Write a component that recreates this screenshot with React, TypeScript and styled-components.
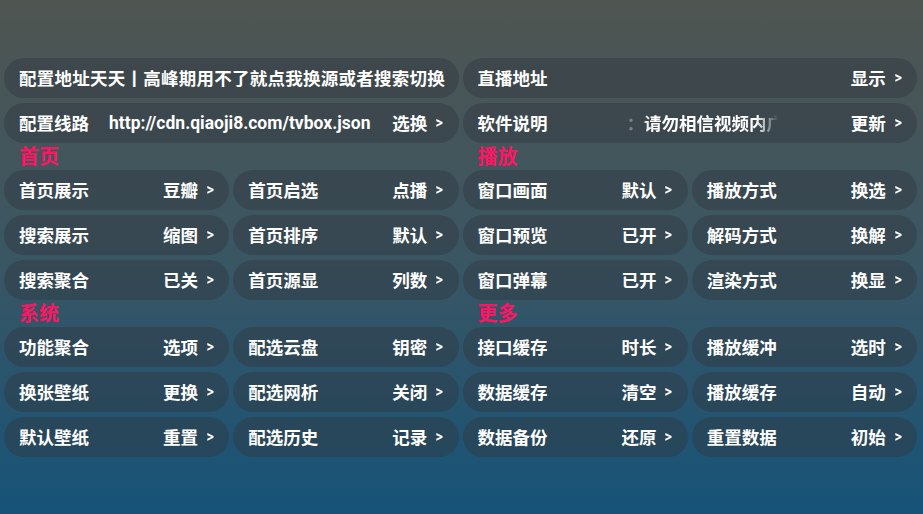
import React from "react";
import styled, { createGlobalStyle } from "styled-components";

const GlobalStyle = createGlobalStyle`
  html, body {
    margin: 0;
    padding: 0;
    height: 100%;
  }
  body {
    font-family: "Roboto", "Noto Sans CJK SC", sans-serif;
    background: #1a5277;
  }
  #root {
    height: 100%;
  }
`;

type Item = { label: string; value: string };

const homeItems: Item[] = [
  { label: "首页展示", value: "豆瓣" },
  { label: "首页启选", value: "点播" },
  { label: "搜索展示", value: "缩图" },
  { label: "首页排序", value: "默认" },
  { label: "搜索聚合", value: "已关" },
  { label: "首页源显", value: "列数" },
];

const playItems: Item[] = [
  { label: "窗口画面", value: "默认" },
  { label: "播放方式", value: "换选" },
  { label: "窗口预览", value: "已开" },
  { label: "解码方式", value: "换解" },
  { label: "窗口弹幕", value: "已开" },
  { label: "渲染方式", value: "换显" },
];

const systemItems: Item[] = [
  { label: "功能聚合", value: "选项" },
  { label: "配选云盘", value: "钥密" },
  { label: "换张壁纸", value: "更换" },
  { label: "配选网析", value: "关闭" },
  { label: "默认壁纸", value: "重置" },
  { label: "配选历史", value: "记录" },
];

const moreItems: Item[] = [
  { label: "接口缓存", value: "时长" },
  { label: "播放缓冲", value: "选时" },
  { label: "数据缓存", value: "清空" },
  { label: "播放缓存", value: "自动" },
  { label: "数据备份", value: "还原" },
  { label: "重置数据", value: "初始" },
];

const App = () => {
  return (
    <>
      <GlobalStyle />
      <S.Page>
        <S.Column>
          <S.Card>
            <S.Label $wide>配置地址天天丨高峰期用不了就点我换源或者搜索切换</S.Label>
          </S.Card>
          <S.Card>
            <S.Label>配置线路</S.Label>
            <S.Url>http://cdn.qiaoji8.com/tvbox.json</S.Url>
            <Value text="选换" />
          </S.Card>
          <S.Heading>首页</S.Heading>
          <Grid items={homeItems} />
          <S.Heading>系统</S.Heading>
          <Grid items={systemItems} />
        </S.Column>
        <S.Column>
          <S.Card>
            <S.Label>直播地址</S.Label>
            <Value text="显示" />
          </S.Card>
          <S.Card>
            <S.Label>软件说明</S.Label>
            <S.Marquee>
              <span>：请勿相信视频内广</span>
            </S.Marquee>
            <Value text="更新" />
          </S.Card>
          <S.Heading>播放</S.Heading>
          <Grid items={playItems} />
          <S.Heading>更多</S.Heading>
          <Grid items={moreItems} />
        </S.Column>
      </S.Page>
    </>
  );
};

const Value = ({ text }: { text: string }) => (
  <S.Value>
    {text}
    <S.Arrow>&gt;</S.Arrow>
  </S.Value>
);

const Grid = ({ items }: { items: Item[] }) => (
  <S.Grid>
    {items.map((it) => (
      <S.Card key={it.label}>
        <S.Label>{it.label}</S.Label>
        <Value text={it.value} />
      </S.Card>
    ))}
  </S.Grid>
);

const S = {
  Page: styled.div`
    box-sizing: border-box;
    width: 100%;
    min-height: 100%;
    padding: 58px 6px 0 4px;
    display: grid;
    grid-template-columns: 1fr 1fr;
    column-gap: 4px;
    align-content: start;
    background: linear-gradient(180deg, #4f5551 0%, #3a5663 50%, #165378 100%);
  `,
  Column: styled.div`
    display: flex;
    flex-direction: column;
    gap: 5px;
    min-width: 0;
  `,
  Grid: styled.div`
    display: grid;
    grid-template-columns: 1fr 1fr;
    column-gap: 4px;
    row-gap: 5px;
  `,
  Card: styled.div`
    box-sizing: border-box;
    height: 40px;
    border-radius: 20px;
    padding: 0 15px 1px;
    display: flex;
    align-items: center;
    background: rgba(48, 56, 64, 0.45);
    color: #ffffff;
    font-size: 17.5px;
    font-weight: 700;
    white-space: nowrap;
    overflow: hidden;
    min-width: 0;
  `,
  Label: styled.span<{ $wide?: boolean }>`
    flex-shrink: 0;
    letter-spacing: ${({ $wide }) => ($wide ? "0.25px" : "0")};
  `,
  Url: styled.span`
    margin-left: 20px;
    font-size: 17.5px;
  `,
  Value: styled.span`
    margin-left: auto;
    display: flex;
    align-items: center;
  `,
  Arrow: styled.span`
    margin-left: 8px;
    font-size: 16px;
    transform: scaleX(0.9);
  `,
  Heading: styled.div`
    height: 17px;
    margin: 0 0 0 15px;
    line-height: 18px;
    font-size: 20px;
    font-weight: 700;
    color: #ff1464;
  `,
  Marquee: styled.div`
    margin-left: 64px;
    width: 168px;
    overflow: hidden;
    -webkit-mask-image: linear-gradient(90deg, transparent 0, transparent 10px, #000 38px, #000 144px, transparent 166px);
    mask-image: linear-gradient(90deg, transparent 0, transparent 10px, #000 38px, #000 144px, transparent 166px);
    > span {
      display: inline-block;
      transform: translateX(15px);
    }
  `,
};

export default App;
